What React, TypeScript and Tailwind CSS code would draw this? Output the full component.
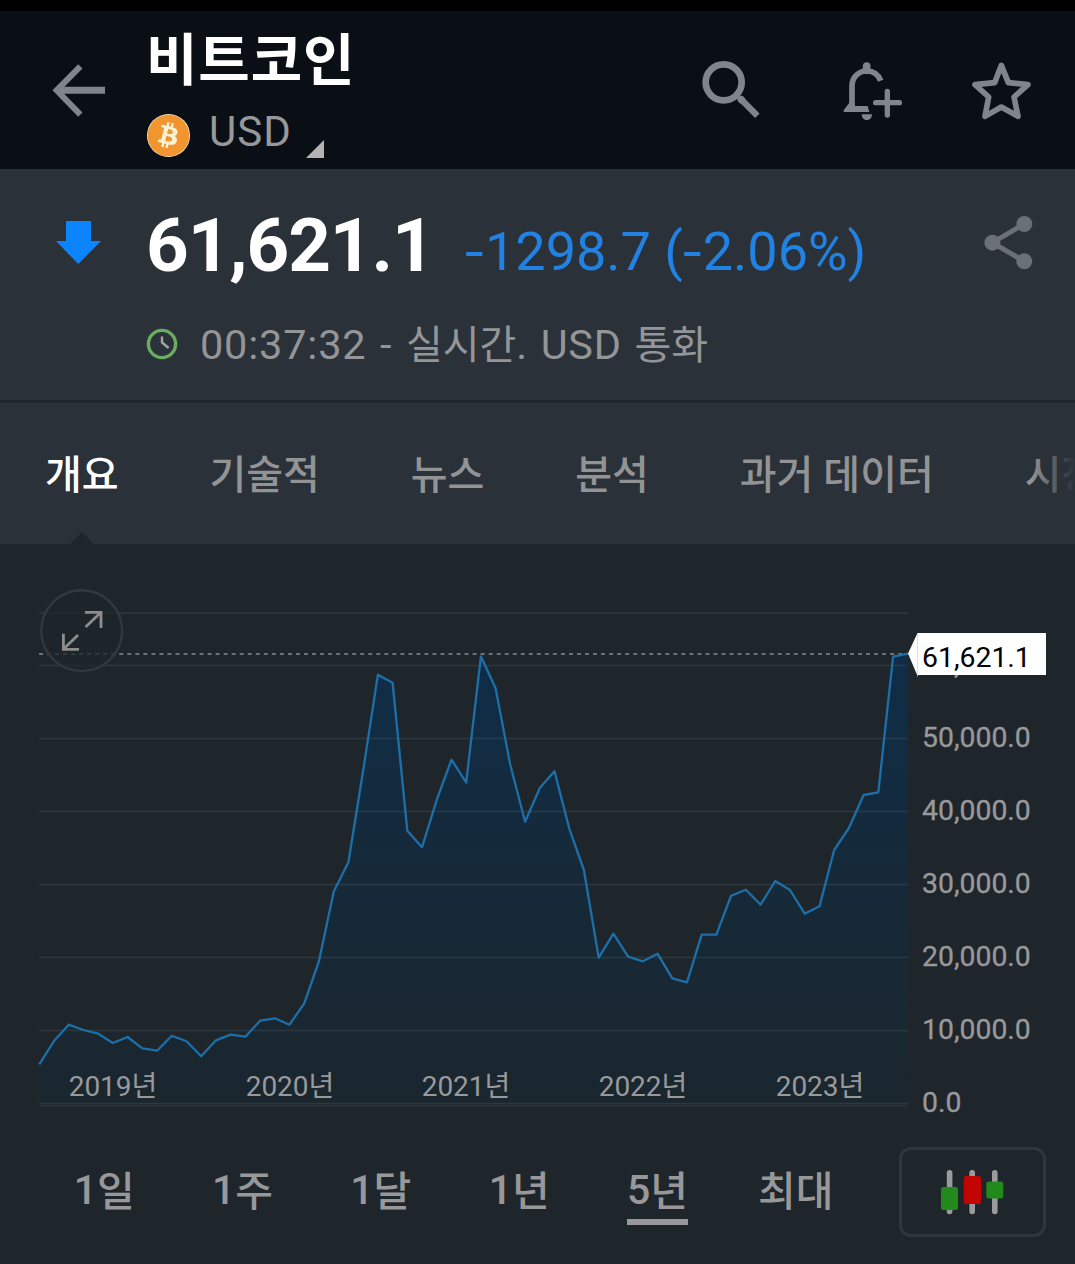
import { FaBitcoin } from 'react-icons/fa'

const TABS = ['개요', '기술적', '뉴스', '분석', '과거 데이터', '시장']
const RANGES = [
  { count: '1', unit: '일' },
  { count: '1', unit: '주' },
  { count: '1', unit: '달' },
  { count: '1', unit: '년' },
  { count: '5', unit: '년' },
  { count: '', unit: '최대' },
]

// y position of each monthly close, in chart pixels
const CLOSES = [
  1064.3, 1041, 1024.7, 1030, 1033.7, 1043, 1037, 1048.3, 1050.7, 1035.7, 1041.3, 1056.3,
  1040.3, 1034.7, 1036.7, 1020.7, 1018.3, 1024.7, 1003.3, 961, 891.7, 862.3, 771, 674.7,
  682.7, 830.7, 847.3, 800, 759.7, 782.5, 656.3, 688.3, 765, 821.7, 788, 771.3,
  828.3, 870, 957.7, 933.7, 956.7, 961.3, 953.7, 978.3, 982.3, 934.7, 934.7, 895.7,
  889.7, 904.7, 881, 890, 913.7, 906.3, 850, 828, 795, 792.3, 656.7, 653.7,
]
const GRID = [613, 665.5, 738.5, 811.5, 884.5, 957.5, 1030.5, 1103.5]
const PRICES = ['60,000.0', '50,000.0', '40,000.0', '30,000.0', '20,000.0', '10,000.0', '0.0']
const YEARS = [
  { label: '2019년', x: 113 },
  { label: '2020년', x: 290 },
  { label: '2021년', x: 466 },
  { label: '2022년', x: 643 },
  { label: '2023년', x: 820 },
]

const line = CLOSES.map((y, i) => `${(39.3 + i * 14.72).toFixed(1)},${y}`).join(' ')

function BackIcon() {
  return (
    <svg viewBox="0 0 180 180" className="size-[60px]" fill="none" stroke="#80858d">
      <path d="M94 19 L23 91 L94 164" strokeWidth="18" />
      <path d="M30 91 H168" strokeWidth="21" />
    </svg>
  )
}

function SearchIcon() {
  return (
    <svg viewBox="0 0 200 200" className="size-[66.7px]" fill="none" stroke="#80858d">
      <circle cx="80" cy="82" r="54" strokeWidth="20" />
      <path d="M118 120 L134 136" strokeWidth="14" />
      <path d="M133 134 L134 135" strokeWidth="22" strokeLinecap="round" />
      <path d="M132 133 L181 182" strokeWidth="19" />
    </svg>
  )
}

function AlertIcon() {
  return (
    <svg viewBox="0 0 200 200" className="size-[66.7px]" fill="none" stroke="#80858d">
      <path d="M80 27 V40" strokeWidth="23" strokeLinecap="round" />
      <path d="M36 150 V86 A44 44 0 0 1 80 42 C100 42 115 53 122 71" strokeWidth="17" />
      <path d="M11 165 V160 L28 137 H44 V147 H83 L88 165 Z" fill="#80858d" stroke="none" />
      <path d="M65 172 H96 A15.5 18 0 0 1 65 172 Z" fill="#80858d" stroke="none" />
      <path d="M142 103 V174 M107 137 H178" strokeWidth="16" strokeLinecap="round" />
    </svg>
  )
}

function StarIcon() {
  return (
    <svg viewBox="0 0 200 200" className="size-[66.7px]" fill="none" stroke="#80858d">
      <path
        d="M100 25 L121 77 L180 83 L138 120 L150 178 L100 150 L51 178 L62 120 L21 83 L80 77 Z"
        strokeWidth="17"
        strokeLinejoin="round"
      />
    </svg>
  )
}

function ShareIcon() {
  return (
    <svg viewBox="0 0 50 56" className="h-[56px] w-[50px]" fill="#6b6f76" stroke="#6b6f76">
      <path d="M40.3 10 L8.4 28.7 L40.3 47.3" fill="none" strokeWidth="5" />
      <circle cx="40.3" cy="10" r="8" stroke="none" />
      <circle cx="8.4" cy="28.7" r="8" stroke="none" />
      <circle cx="40.3" cy="47.3" r="8" stroke="none" />
    </svg>
  )
}

function ClockIcon() {
  return (
    <svg viewBox="0 0 32 32" className="size-8" fill="none">
      <circle cx="16" cy="16" r="13.6" stroke="#69ad60" strokeWidth="3.4" />
      <path d="M16 8.5 V14.5 L22.6 20" stroke="#a3a5a6" strokeWidth="2.4" />
    </svg>
  )
}

function CandlesIcon() {
  return (
    <svg viewBox="0 0 64 48" className="mr-px mb-px h-12 w-16">
      <g stroke="#9b9b9d" strokeWidth="5.6" strokeLinecap="round">
        <path d="M9.6 4.8 V43.5 M32.2 4.8 V43.5 M54.8 4.8 V43.5" />
      </g>
      <rect x="1" y="19" width="17" height="23" rx="2.5" fill="#218a1b" />
      <rect x="23.7" y="8" width="17.3" height="28" rx="2.5" fill="#c20503" />
      <rect x="46.3" y="13.5" width="17" height="17" rx="2.5" fill="#218a1b" />
    </svg>
  )
}

function Minus() {
  return <span className="mr-[5px] inline-block origin-left scale-x-125">-</span>
}

function Chart() {
  return (
    <svg
      viewBox="0 544 1075 584"
      className="block h-[584px] w-[1075px] font-['Roboto','Noto_Sans_CJK_KR',sans-serif]"
    >
      <defs>
        <linearGradient id="area" gradientUnits="userSpaceOnUse" x1="0" y1="655" x2="0" y2="1104">
          <stop offset="0" stopColor="#0f2d48" />
          <stop offset="0.45" stopColor="#152a3a" />
          <stop offset="1" stopColor="#1b262e" />
        </linearGradient>
      </defs>

      <polygon points={`39.3,1104 ${line} 908,1104`} fill="url(#area)" />
      {GRID.map((y) => (
        <path key={y} d={`M39 ${y} H908`} stroke="#4a5966" strokeOpacity="0.36" strokeWidth="1.6" />
      ))}
      <path d="M39 1105.7 H908" stroke="#28323b" strokeWidth="2" />
      <path d="M39 654 H908" stroke="#6d7276" strokeWidth="1.8" strokeDasharray="4 4.03" />
      <polyline points={line} fill="none" stroke="#1c6fa8" strokeWidth="2.3" strokeLinejoin="round" />

      {/* Fullscreen toggle */}
      <circle cx="81.7" cy="630.7" r="40.4" fill="#1f252b" fillOpacity="0.75" stroke="#33373f" strokeWidth="2.4" />
      <g fill="none" stroke="#8d8d8b" strokeWidth="2.8">
        <path d="M85 612.3 H101 V628 M101 612.3 L85.6 627" />
        <path d="M63.4 633.7 V649.3 H79 M63.4 649.3 L78 635" />
      </g>

      <g fill="#98999b" fontSize="28.4">
        {YEARS.map((year) => (
          <text key={year.label} x={year.x} y="1095.7" fontSize="28" textAnchor="middle">
            {year.label}
          </text>
        ))}
        {PRICES.map((price, i) => (
          <text key={price} x="922" y={674.3 + i * 73} stroke="#98999b" strokeWidth="0.3">
            {price}
          </text>
        ))}
      </g>

      {/* Last price tag */}
      <path d="M908 653.5 L917.5 633 H1046 V675 H918 V677 Z" fill="#fff" />
      <path d="M917.5 633 V676" stroke="#c9c9c9" strokeWidth="0.6" />
      <text x="922" y="667" fontSize="28.4" fill="#000">
        61,621.1
      </text>
    </svg>
  )
}

export default function App() {
  return (
    <div className="h-[1264px] w-[1075px] overflow-hidden bg-[#1f262b] font-['Roboto','Noto_Sans_CJK_KR',sans-serif] whitespace-nowrap">
      <div className="h-[11px] bg-black" />

      {/* Header */}
      <header className="flex h-[158px] bg-[#0a0f16] pl-[49px]">
        <div className="pt-[49px]">
          <BackIcon />
        </div>
        <div className="ml-[37px] flex w-[551px] flex-col">
          <h1 className="mt-[18px] h-[64px] text-[56px] leading-[64px] font-bold tracking-[0.8px] text-white">비트코인</h1>
          <div className="mt-[20px] flex h-[44px] pl-px">
            <div className="mt-px size-[43px] rounded-full bg-[#fdf3d3]">
              <FaBitcoin className="size-[43px] text-[#f0952f]" />
            </div>
            <span className="ml-[19px] w-[97px] text-[42px] leading-[37px] font-[450] tracking-[1px] text-[#98989a]">USD</span>
            <svg viewBox="0 0 18 18" className="mt-[27px] size-[18px]">
              <path d="M18 0 V18 H0 Z" fill="#b5b2b4" />
            </svg>
          </div>
        </div>
        <div className="flex gap-[76px] pt-[44px]">
          <SearchIcon />
          <div className="mt-[1.5px]">
            <AlertIcon />
          </div>
          <div className="mt-[1.7px] -ml-[14px]">
            <StarIcon />
          </div>
        </div>
      </header>

      {/* Quote */}
      <section className="h-[231px] bg-[#2b3138]">
        <div className="flex h-[150px] pt-[40px] pl-[56px]">
          <svg viewBox="0 0 45 43" className="mt-[12px] h-[43px] w-[45px]">
            <path d="M10 0 H35 V20 H45 L22.3 43 L0 20 H10 Z" fill="#0c84fe" />
          </svg>
          <span className="ml-[45px] w-[319px] text-[74.5px] leading-[73px] font-bold tracking-[-1.1px] text-white">61,621.1</span>
          <span className="w-[519px] text-[54px] leading-[86px] text-[#2182e4]">
            <Minus />
            1298.7 (<Minus />
            2.06%)
          </span>
          <div className="mt-[5px]">
            <ShareIcon />
          </div>
        </div>
        <div className="flex h-[50px] items-center pl-[146px]">
          <ClockIcon />
          <div className="mt-[3px] ml-[22px] text-[41.5px] leading-[50px] tracking-[0.8px] text-[#949597]">
            <span className="[word-spacing:2.5px]">00:37:32 - </span>
            <span className="text-[40px] tracking-normal">실시간</span>
            <span className="[word-spacing:1.5px]">. USD </span>
            <span className="text-[40px] tracking-normal">통화</span>
          </div>
        </div>
      </section>

      {/* Tabs */}
      <nav className="relative flex h-[144px] gap-[90.9px] overflow-hidden border-t-[3px] border-[#20262c] bg-[#2b3138] pl-[45px] text-[40px] leading-[145px] font-medium text-[#929395]">
        {TABS.map((tab) => (
          <span key={tab} className={tab === '개요' ? 'text-white' : ''}>
            {tab}
          </span>
        ))}
        <div className="absolute top-0 right-0 h-full w-[44px] bg-linear-to-r from-transparent to-[#2b3138]" />
        <svg viewBox="0 0 24 12" className="absolute bottom-0 left-[70px] h-[12px] w-[24px]">
          <path d="M0 12 L12 0 L24 12 Z" fill="#1f262b" />
        </svg>
      </nav>

      <Chart />

      {/* Range picker */}
      <div className="flex pt-[19px] pl-[35px]">
        <div className="grid h-[90px] w-[830px] grid-cols-6 text-[41px] leading-[86px] font-medium text-[#98989a]">
          {RANGES.map(({ count, unit }) => (
            <div key={count + unit} className="flex justify-center">
              <span className="relative">
                {count}
                <span className="relative top-[2px]">{unit}</span>
                {count === '5' && <span className="absolute top-[72px] left-0 h-[6px] w-[61px] bg-[#98989a]" />}
              </span>
            </div>
          ))}
        </div>
        <button className="ml-[34px] flex h-[90px] w-[147px] items-center justify-center rounded-xl border-[3px] border-[#30353e]">
          <CandlesIcon />
        </button>
      </div>
    </div>
  )
}
